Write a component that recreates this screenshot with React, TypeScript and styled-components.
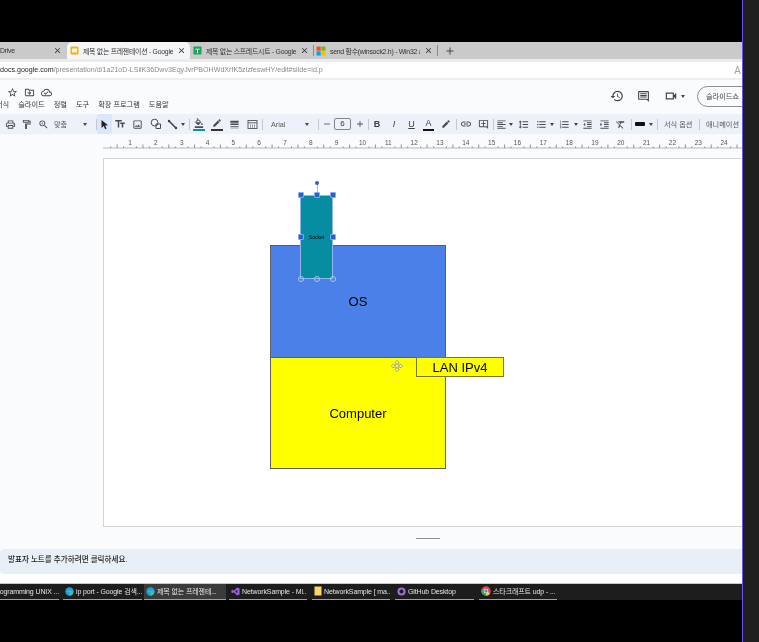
import React from "react";
import styled, { createGlobalStyle } from "styled-components";
import {
  MdStarBorder, MdOutlineDriveFileMove, MdOutlineCloudDone, MdHistory, MdOutlineInsertComment, MdOutlineVideocam,
  MdOutlinePrint, MdOutlineFormatPaint, MdOutlineZoomIn, MdOutlineTextFields, MdOutlineImage, MdFormatColorFill,
  MdEdit, MdLineWeight, MdLink, MdOutlineAddComment, MdFormatAlignLeft, MdFormatLineSpacing, MdFormatListBulleted,
  MdFormatListNumbered, MdFormatIndentIncrease, MdFormatIndentDecrease, MdFormatClear, MdClose, MdAdd, MdRemove,
} from "react-icons/md";

const Global = createGlobalStyle`
  html, body { margin: 0; padding: 0; background: #000; }
  #root { width: 759px; height: 642px; overflow: hidden; }
  * { box-sizing: border-box; }
`;

const SANS = `"Liberation Sans", "Noto Sans CJK KR", sans-serif`;

const Page = styled.div`
  display: flex;
  width: 759px;
  height: 642px;
  font-family: ${SANS};
  background: #000;
  filter: blur(0.4px);
`;
const Main = styled.div`
  width: 742px;
  height: 642px;
  display: flex;
  flex-direction: column;
  overflow: hidden;
  flex-shrink: 0;
  background: #fff;
`;
const SideEdge = styled.div`
  width: 17px;
  border-left: 1px solid #6a55e8;
  background: #1f1f1f;
`;
const TopBlack = styled.div`height: 42px; background: #000; flex-shrink: 0;`;

const TabStrip = styled.div`
  height: 17px;
  flex-shrink: 0;
  display: flex;
  align-items: stretch;
  background: #cacaca;
`;
const Tab = styled.div<{ $w: number; $pl: number; $pr: number; $active?: boolean }>`
  width: ${p => p.$w}px;
  flex-shrink: 0;
  display: flex;
  align-items: center;
  gap: 4px;
  padding: 0 ${p => p.$pr}px 0 ${p => p.$pl}px;
  font-size: 6.9px;
  color: #333;
  background: ${p => (p.$active ? "#f4f5f7" : "transparent")};
  border-radius: ${p => (p.$active ? "5px 5px 0 0" : "0")};
  white-space: nowrap;
  overflow: hidden;
`;
const TabTitle = styled.span`
  flex: 1;
  overflow: hidden;
  min-width: 0;
  letter-spacing: -0.25px;
`;
const TabSep = styled.div`
  width: 1px;
  margin: 3px 1px;
  background: #8c8c8c;
  flex-shrink: 0;
`;
const NewTab = styled.div`
  width: 22px;
  display: flex;
  align-items: center;
  justify-content: center;
  color: #444;
`;
const TabGap = styled.div`height: 3px; flex-shrink: 0; background: #ececec;`;
const AddressBar = styled.div`
  height: 16px;
  flex-shrink: 0;
  display: flex;
  align-items: center;
  justify-content: space-between;
  background: #fff;
  font-size: 7.1px;
  color: #8a8a8a;
  white-space: nowrap;
  padding-right: 1px;
`;
const Domain = styled.span`color: #222;`;
const ReadAloud = styled.span`color: #a5a5a5; font-size: 10px;`;
const AddressEdge = styled.div`height: 2px; flex-shrink: 0; background: #eeeeee;`;

const AppHeader = styled.div`
  height: 34px;
  flex-shrink: 0;
  display: flex;
  justify-content: space-between;
  background: #f9fbfd;
`;
const TitleCol = styled.div`
  display: flex;
  flex-direction: column;
  padding-top: 6px;
`;
const DocIcons = styled.div`
  display: flex;
  gap: 6px;
  padding-left: 7px;
  height: 12px;
  align-items: center;
  color: #444;
`;
const MenuBar = styled.div`
  display: flex;
  margin-top: 1px;
  font-size: 7.2px;
  line-height: 12px;
  color: #333;
  gap: 9px;
  margin-left: -4px;
`;
const HeaderRight = styled.div`
  display: flex;
  align-items: center;
  height: 32px;
  color: #444;
`;
const HeaderIcon = styled.div<{ $w: number; $ml?: number }>`
  width: ${p => p.$w}px;
  margin-left: ${p => p.$ml ?? 0}px;
  display: flex;
  align-items: center;
  justify-content: center;
`;
const SlideshowBtn = styled.div`
  width: 60px;
  height: 21px;
  margin-left: 12px;
  margin-right: -15px;
  border: 1px solid #8a8f95;
  border-radius: 11px;
  font-size: 7.2px;
  color: #444;
  padding-left: 8px;
  line-height: 19px;
  white-space: nowrap;
`;
const Caret = styled.span`
  display: inline-block;
  width: 0;
  height: 0;
  border-left: 2.5px solid transparent;
  border-right: 2.5px solid transparent;
  border-top: 3px solid #444;
`;

const Toolbar = styled.div`
  height: 20px;
  flex-shrink: 0;
  display: flex;
  align-items: center;
  padding-left: 2px;
  background: #edf2fa;
  color: #484c50;
  white-space: nowrap;
`;
const Slot = styled.div<{ $w: number; $active?: boolean }>`
  width: ${p => p.$w}px;
  height: 20px;
  flex-shrink: 0;
  display: flex;
  align-items: center;
  justify-content: center;
  background: ${p => (p.$active ? "#d9e6fb" : "transparent")};
  border-radius: ${p => (p.$active ? "3px" : "0")};
  position: relative;
`;
const Sep = styled.div<{ $ml: number }>`
  width: 1px;
  height: 11px;
  margin-left: ${p => p.$ml}px;
  flex-shrink: 0;
  background: #c7c7c7;
`;
const TextSlot = styled.div<{ $w: number; $pl: number }>`
  width: ${p => p.$w}px;
  padding-left: ${p => p.$pl}px;
  flex-shrink: 0;
  font-size: 7.2px;
  color: #555;
`;
const SizeBox = styled.div`
  width: 17px;
  height: 12px;
  border: 1px solid #80868b;
  border-radius: 2px;
  flex-shrink: 0;
  font-size: 8px;
  text-align: center;
  line-height: 10px;
  color: #333;
`;
const Letter = styled.span<{ $b?: boolean; $i?: boolean; $u?: boolean }>`
  font-size: 9px;
  font-weight: ${p => (p.$b ? 700 : 400)};
  font-style: ${p => (p.$i ? "italic" : "normal")};
  text-decoration: ${p => (p.$u ? "underline" : "none")};
  color: #3c4043;
`;
const ColorBar = styled.div<{ $c: string }>`
  position: absolute;
  left: 3px;
  right: 3px;
  bottom: 3px;
  height: 2px;
  background: ${p => p.$c};
`;
const IconUp = styled.div`
  margin-top: -3px;
  display: flex;
`;
const BorderSwatch = styled.div`
  width: 10px;
  height: 4px;
  background: #111;
  border-radius: 1px;
`;
const ToolSvg = styled.svg`display: block;`;

const RulerBar = styled.div`
  height: 16px;
  flex-shrink: 0;
  background: #f9fbfd;
`;

const CanvasArea = styled.div`
  height: 377px;
  flex-shrink: 0;
  padding: 8px 0 0 103px;
  background: #f9fbfd;
`;
const Slide = styled.div`
  position: relative;
  width: 640px;
  height: 369px;
  background: #fff;
  border: 1px solid #d4d4d4;
`;
const Shape = styled.div<{ $x: number; $y: number; $w: number; $h: number; $bg: string; $fs?: number; $line?: string }>`
  position: absolute;
  left: ${p => p.$x - 104}px;
  top: ${p => p.$y - 159}px;
  width: ${p => p.$w}px;
  height: ${p => p.$h}px;
  background: ${p => p.$bg};
  border: 1px solid ${p => p.$line ?? "#5f5f5f"};
  display: flex;
  align-items: center;
  justify-content: center;
  font-size: ${p => p.$fs ?? 13}px;
  color: #000;
`;
const Handle = styled.div<{ $x: number; $y: number; $solid?: boolean }>`
  position: absolute;
  left: ${p => p.$x - 104 - 3}px;
  top: ${p => p.$y - 159 - 3}px;
  width: 6px;
  height: 6px;
  border-radius: ${p => (p.$solid ? "1px" : "50%")};
  background: ${p => (p.$solid ? "#2a62c4" : "transparent")};
  border: 1px solid ${p => (p.$solid ? "#7fabee" : "#a8c8f5")};
`;
const RotateStem = styled.div`
  position: absolute;
  left: ${316.5 - 104}px;
  top: ${184 - 159}px;
  width: 1px;
  height: 11px;
  background: #b4bcc8;
`;
const RotateDot = styled.div`
  position: absolute;
  left: ${315 - 104}px;
  top: ${181 - 159}px;
  width: 4px;
  height: 4px;
  border-radius: 50%;
  background: #2a62c4;
`;
const MoveCursor = styled.svg`
  position: absolute;
  left: ${391 - 104}px;
  top: ${360 - 159}px;
`;

const Splitter = styled.div`
  height: 22px;
  flex-shrink: 0;
  background: #f9fbfd;
  display: flex;
  align-items: center;
  padding-left: 416px;
`;
const SplitLine = styled.div`
  width: 24px;
  height: 1px;
  background: #8f8f8f;
`;
const Notes = styled.div`
  height: 25px;
  flex-shrink: 0;
  background: #e9eff7;
  border-radius: 4px 0 0 4px;
  padding-left: 8px;
  font-size: 7.55px;
  font-weight: 500;
  line-height: 22px;
  color: #222;
`;
const NotesFoot = styled.div`
  height: 10px;
  flex-shrink: 0;
  background: #fff;
  border-bottom: 1px solid #c9c9c9;
`;
const Taskbar = styled.div`
  height: 16px;
  flex-shrink: 0;
  display: flex;
  background: #1d1d1d;
`;
const TaskItem = styled.div<{ $w: number; $ml: number; $active?: boolean; $clip?: boolean }>`
  width: ${p => p.$w}px;
  margin-left: ${p => p.$ml}px;
  flex-shrink: 0;
  display: flex;
  align-items: center;
  justify-content: ${p => (p.$clip ? "flex-end" : "flex-start")};
  gap: 2px;
  padding: 0 ${p => (p.$clip ? 0 : 2)}px 1px ${p => (p.$clip ? 0 : 2)}px;
  border-bottom: 1px solid #6fb0dc;
  background: ${p => (p.$active ? "#3b3b3b" : "transparent")};
  font-size: 7px;
  letter-spacing: -0.12px;
  color: #e4e4e4;
  white-space: nowrap;
  overflow: hidden;
`;
const BottomBlack = styled.div`flex: 1; background: #000;`;

const Favicon = styled.svg`flex-shrink: 0; display: block;`;

const SlidesIcon = () => (
  <Favicon width="9" height="9" viewBox="0 0 10 10">
    <rect x="0.5" y="0.5" width="9" height="9" rx="1.5" fill="#f4b400" />
    <rect x="2.2" y="2.8" width="5.6" height="4.4" fill="#f8f5e6" />
  </Favicon>
);
const SheetsIcon = () => (
  <Favicon width="9" height="9" viewBox="0 0 10 10">
    <rect x="0.5" y="0.5" width="9" height="9" rx="1" fill="#1ea362" />
    <path d="M2.5 3h5v1h-2v4h-1V4h-2z" fill="#fff" />
  </Favicon>
);
const MsIcon = () => (
  <Favicon width="10" height="10" viewBox="0 0 10 10">
    <rect x="0.5" y="0.5" width="4.2" height="4.2" fill="#f25022" />
    <rect x="5.3" y="0.5" width="4.2" height="4.2" fill="#7fba00" />
    <rect x="0.5" y="5.3" width="4.2" height="4.2" fill="#00a4ef" />
    <rect x="5.3" y="5.3" width="4.2" height="4.2" fill="#ffb900" />
  </Favicon>
);
const EdgeIcon = () => (
  <Favicon width="9" height="9" viewBox="0 0 10 10">
    <circle cx="5" cy="5" r="4.7" fill="#1b9de2" />
    <path d="M1 6.5C2 3.5 6 2.5 9 5c.3 2-1 4-3 4.5C4 9 3.5 6.5 5 5.5 3.5 5 2 5.5 1 6.5z" fill="#37c6a4" />
  </Favicon>
);
const VsIcon = () => (
  <Favicon width="9" height="9" viewBox="0 0 10 10">
    <path d="M7 .5 9.5 1.6v6.8L7 9.5 3 5.8 1.4 7 .5 6.5v-3L1.4 3 3 4.2zM7 3 4.6 5 7 7z" fill="#9a62d8" />
  </Favicon>
);
const NoteIcon = () => (
  <Favicon width="8" height="10" viewBox="0 0 8 10">
    <rect x="0.5" y="0.5" width="7" height="9" fill="#f6d860" />
  </Favicon>
);
const GithubIcon = () => (
  <Favicon width="9" height="9" viewBox="0 0 10 10">
    <circle cx="5" cy="5" r="4.5" fill="#a56bd8" />
    <circle cx="5" cy="5" r="2.2" fill="#1d1d1d" />
  </Favicon>
);
const ChromeIcon = () => (
  <Favicon width="10" height="10" viewBox="0 0 10 10">
    <circle cx="5" cy="5" r="4.7" fill="#e6483d" />
    <path d="M5 5 9.2 7.2A4.7 4.7 0 0 1 5 9.7z" fill="#f7c52d" />
    <path d="M5 5v4.7A4.7 4.7 0 0 1 .9 2.6z" fill="#35a853" />
    <circle cx="5" cy="5" r="2.3" fill="#fff" />
    <circle cx="5" cy="5" r="1.7" fill="#4285f4" />
  </Favicon>
);

const CursorIcon = () => (
  <ToolSvg width="11" height="11" viewBox="0 0 11 11">
    <path d="M2.5 1v8l2.2-2 1.5 3.2 1.4-.7L6.1 6.4l2.9-.2z" fill="#202124" />
  </ToolSvg>
);
const ShapeIcon = () => (
  <ToolSvg width="12" height="12" viewBox="0 0 12 12" fill="none" stroke="#484c50" strokeWidth="1">
    <circle cx="4.6" cy="4.6" r="3.4" />
    <path d="M6 6h4.5v4.5H6z" />
  </ToolSvg>
);
const LineIcon = () => (
  <ToolSvg width="11" height="11" viewBox="0 0 11 11">
    <path d="M2 2 9 9" stroke="#3c4043" strokeWidth="1.5" />
    <circle cx="2" cy="2" r="1.2" fill="#3c4043" />
    <circle cx="9" cy="9" r="1.2" fill="#3c4043" />
  </ToolSvg>
);
const BackgroundIcon = () => (
  <ToolSvg width="11" height="11" viewBox="0 0 11 11" fill="none" stroke="#5f6368" strokeWidth="1">
    <rect x="1" y="1.5" width="9" height="8" />
    <path d="M1 3.8h9" />
    <path d="M3 6.2h1M5 6.2h1M7 6.2h1M3 8h1M5 8h1M7 8h1" />
  </ToolSvg>
);

const Ruler = () => {
  const unit = 25.83;
  const origin = 104.2;
  const ticks: React.ReactNode[] = [];
  for (let i = 0; i <= 100; i++) {
    const x = origin + (i * unit) / 4;
    if (x > 742) break;
    const h = i % 4 === 0 ? 0 : i % 2 === 0 ? 3.5 : 1.5;
    if (h) ticks.push(<line key={i} x1={x} x2={x} y1={14 - h} y2={14} stroke="#777" strokeWidth="0.8" />);
  }
  const nums = Array.from({ length: 24 }, (_, i) => i + 1);
  return (
    <svg width="742" height="16" viewBox="0 0 742 16" style={{ display: "block" }}>
      <line x1="103" x2="742" y1="14" y2="14" stroke="#a8a8a8" strokeWidth="0.8" />
      {ticks}
      {nums.map(n => (
        <text key={n} x={origin + n * unit} y="11" fontSize="6.5" fill="#555" textAnchor="middle" fontFamily="Liberation Sans">
          {n}
        </text>
      ))}
    </svg>
  );
};

const S = 11;

const TASKS = [
  { w: 59, ml: 0, clip: true, t: "ogramming UNIX ...", icon: null },
  { w: 79, ml: 4, t: "ip port - Google 검색...", icon: <EdgeIcon /> },
  { w: 82, ml: 2, active: true, t: "제목 없는 프레젠테...", icon: <EdgeIcon /> },
  { w: 78, ml: 3, t: "NetworkSample - Mi...", icon: <VsIcon /> },
  { w: 78, ml: 5, t: "NetworkSample [ ma...", icon: <NoteIcon /> },
  { w: 79, ml: 5, t: "GitHub Desktop", icon: <GithubIcon /> },
  { w: 78, ml: 5, t: "스타크래프트 udp - ...", icon: <ChromeIcon /> },
];

export default function App() {
  return (
    <>
      <Global />
      <Page>
        <Main>
          <TopBlack />
          <TabStrip>
            <Tab $w={67} $pl={0} $pr={5}>
              <TabTitle>Drive</TabTitle>
              <MdClose size={9} />
            </Tab>
            <Tab $w={123} $pl={3} $pr={4} $active>
              <SlidesIcon />
              <TabTitle>제목 없는 프레젠테이션 - Google</TabTitle>
              <MdClose size={9} />
            </Tab>
            <Tab $w={122} $pl={3} $pr={3}>
              <SheetsIcon />
              <TabTitle>제목 없는 스프레드시트 - Google</TabTitle>
              <MdClose size={9} />
            </Tab>
            <TabSep />
            <Tab $w={121} $pl={1} $pr={3}>
              <MsIcon />
              <TabTitle>send 함수(winsock2.h) - Win32 ap</TabTitle>
              <MdClose size={9} />
            </Tab>
            <TabSep />
            <NewTab>
              <MdAdd size={12} />
            </NewTab>
          </TabStrip>
          <TabGap />
          <AddressBar>
            <span>
              <Domain>docs.google.com</Domain>/presentation/d/1a21oD-LSilK36Dwv3EqyJvrPBOHWdXrfK5zizfeswHY/edit#slide=id.p
            </span>
            <ReadAloud>A</ReadAloud>
          </AddressBar>
          <AddressEdge />
          <AppHeader>
            <TitleCol>
              <DocIcons>
                <MdStarBorder size={11} />
                <MdOutlineDriveFileMove size={11} />
                <MdOutlineCloudDone size={11} />
              </DocIcons>
              <MenuBar>
                <span>서식</span>
                <span>슬라이드</span>
                <span>정렬</span>
                <span>도구</span>
                <span>확장 프로그램</span>
                <span>도움말</span>
              </MenuBar>
            </TitleCol>
            <HeaderRight>
              <HeaderIcon $w={26}><MdHistory size={14} /></HeaderIcon>
              <HeaderIcon $w={26}><MdOutlineInsertComment size={13} /></HeaderIcon>
              <HeaderIcon $w={20} $ml={5}><MdOutlineVideocam size={14} /></HeaderIcon>
              <Caret />
              <SlideshowBtn>슬라이드쇼</SlideshowBtn>
            </HeaderRight>
          </AppHeader>
          <Toolbar>
            <Slot $w={16}><MdOutlinePrint size={S} /></Slot>
            <Slot $w={16}><MdOutlineFormatPaint size={S} /></Slot>
            <Slot $w={18}><MdOutlineZoomIn size={S} /></Slot>
            <TextSlot $w={28} $pl={2}>맞춤</TextSlot>
            <Slot $w={10}><Caret /></Slot>
            <Sep $ml={6} />
            <Slot $w={15} $active><CursorIcon /></Slot>
            <Slot $w={16}><MdOutlineTextFields size={12} /></Slot>
            <Slot $w={19}><MdOutlineImage size={S} /></Slot>
            <Slot $w={17}><ShapeIcon /></Slot>
            <Slot $w={16}><LineIcon /></Slot>
            <Slot $w={6}><Caret /></Slot>
            <Sep $ml={3} />
            <Slot $w={18}><IconUp><MdFormatColorFill size={10} /></IconUp><ColorBar $c="#0a8fa3" /></Slot>
            <Slot $w={18}><IconUp><MdEdit size={10} /></IconUp><ColorBar $c="#333" /></Slot>
            <Slot $w={17}><MdLineWeight size={S} /></Slot>
            <Slot $w={18}><BackgroundIcon /></Slot>
            <Sep $ml={1} />
            <TextSlot $w={38} $pl={8}>Arial</TextSlot>
            <Slot $w={12}><Caret /></Slot>
            <Sep $ml={5} />
            <Slot $w={15}><MdRemove size={10} /></Slot>
            <SizeBox>6</SizeBox>
            <Slot $w={17}><MdAdd size={10} /></Slot>
            <Sep $ml={0} />
            <Slot $w={16}><Letter $b>B</Letter></Slot>
            <Slot $w={18}><Letter $i>I</Letter></Slot>
            <Slot $w={17}><Letter $u>U</Letter></Slot>
            <Slot $w={17}><IconUp><Letter>A</Letter></IconUp><ColorBar $c="#111" /></Slot>
            <Slot $w={17}><MdEdit size={10} /></Slot>
            <Sep $ml={2} />
            <Slot $w={18}><MdLink size={12} /></Slot>
            <Slot $w={17}><MdOutlineAddComment size={S} /></Slot>
            <Sep $ml={1} />
            <Slot $w={14}><MdFormatAlignLeft size={S} /></Slot>
            <Slot $w={6}><Caret /></Slot>
            <Slot $w={19}><MdFormatLineSpacing size={S} /></Slot>
            <Slot $w={16}><MdFormatListBulleted size={S} /></Slot>
            <Slot $w={6}><Caret /></Slot>
            <Slot $w={18}><MdFormatListNumbered size={S} /></Slot>
            <Slot $w={5}><Caret /></Slot>
            <Slot $w={18}><MdFormatIndentDecrease size={S} /></Slot>
            <Slot $w={16}><MdFormatIndentIncrease size={S} /></Slot>
            <Slot $w={16}><MdFormatClear size={S} /></Slot>
            <Sep $ml={3} />
            <Slot $w={16}><BorderSwatch /></Slot>
            <Slot $w={6}><Caret /></Slot>
            <Sep $ml={3} />
            <TextSlot $w={41} $pl={6}>서식 옵션</TextSlot>
            <Sep $ml={0} />
            <TextSlot $w={60} $pl={6}>애니메이션</TextSlot>
          </Toolbar>
          <RulerBar><Ruler /></RulerBar>
          <CanvasArea>
            <Slide>
              <Shape $x={270} $y={245} $w={176} $h={113} $bg="#4a80e8">OS</Shape>
              <Shape $x={270} $y={357} $w={176} $h={112} $bg="#ffff00">Computer</Shape>
              <Shape $x={416} $y={357} $w={88} $h={20} $bg="#ffff00" $line="#77772a">LAN IPv4</Shape>
              <Shape $x={300} $y={195} $w={33} $h={84} $bg="#068da2" $fs={5} $line="#8fb6ee">Socket</Shape>
              <RotateStem />
              <RotateDot />
              <Handle $x={300.5} $y={195} $solid />
              <Handle $x={317} $y={195} $solid />
              <Handle $x={333} $y={195} $solid />
              <Handle $x={300.5} $y={237} $solid />
              <Handle $x={333} $y={237} $solid />
              <Handle $x={300.5} $y={279} />
              <Handle $x={317} $y={279} />
              <Handle $x={333} $y={279} />
              <MoveCursor width="12" height="12" viewBox="0 0 12 12">
                <path d="M6 .5 8 2.5 6.8 3.2V5.2H8.8L9.5 4l2 2-2 2-.7-1.2H6.8v2L8 9.5l-2 2-2-2 1.2-.7v-2h-2L2.5 8l-2-2 2-2 .7 1.2h2v-2L4 2.5z" fill="#ffffc8" stroke="#8a8a50" strokeWidth="0.8" />
              </MoveCursor>
            </Slide>
          </CanvasArea>
          <Splitter><SplitLine /></Splitter>
          <Notes>발표자 노트를 추가하려면 클릭하세요.</Notes>
          <NotesFoot />
          <Taskbar>
            {TASKS.map(t => (
              <TaskItem key={t.t} $w={t.w} $ml={t.ml} $active={t.active} $clip={t.clip}>
                {t.icon}
                {t.t}
              </TaskItem>
            ))}
          </Taskbar>
          <BottomBlack />
        </Main>
        <SideEdge />
      </Page>
    </>
  );
}
